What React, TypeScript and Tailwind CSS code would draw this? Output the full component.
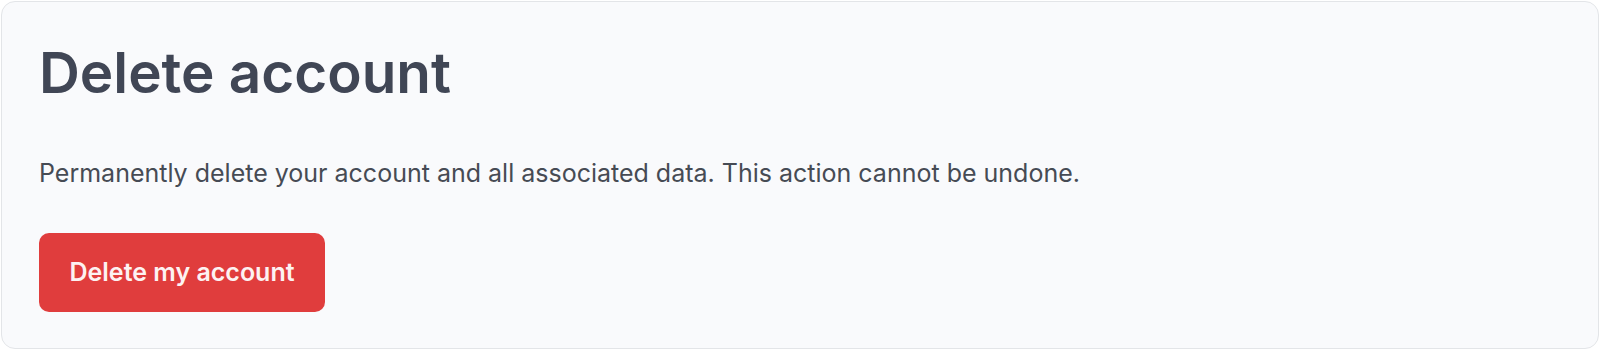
export default function App() {
  return (
    <div className="w-[1600px] h-[350px] bg-white p-px" style={{ fontFamily: "Inter, 'Noto Sans', sans-serif" }}>
      <div className="h-full rounded-[14px] border border-[#e3e5e8] bg-[#f9fafc] px-[37px] pt-[37px]">
        <h1 className="text-[56.6px] leading-[1.21] font-semibold text-[#404655]">
          Delete account
        </h1>
        <p className="mt-[48px] text-[25px] leading-[1.5] text-[#464b54]">
          Permanently delete your account and all associated data. This action cannot be undone.
        </p>
        <button className="mt-[40px] flex h-[79px] w-[286px] items-center justify-center rounded-[10px] bg-[#e03d3d] text-[25px] leading-[1.5] font-semibold text-[#fdf2f2]">
          Delete my account
        </button>
      </div>
    </div>
  );
}
